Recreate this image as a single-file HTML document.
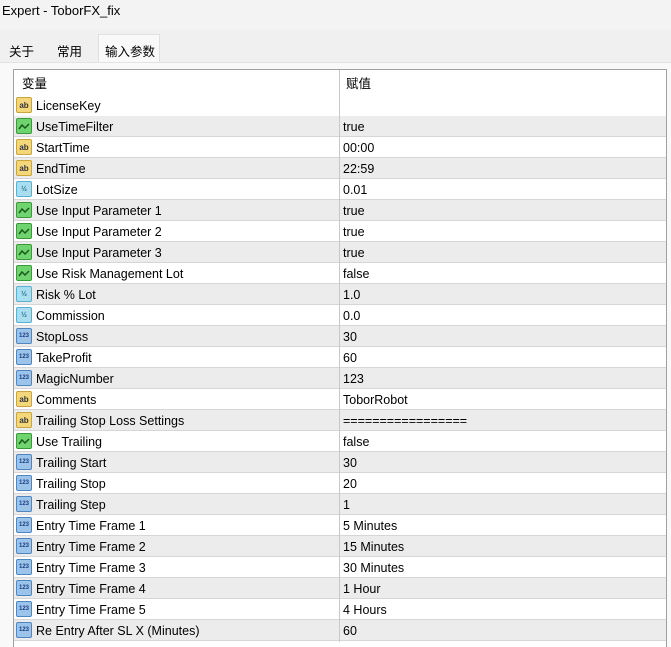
<!DOCTYPE html><html><head><meta charset="utf-8"><style>
*{margin:0;padding:0;box-sizing:border-box}
body{width:671px;height:647px;overflow:hidden;background:#f0f0f0;font-family:"Liberation Sans","Noto Sans CJK SC",sans-serif;font-size:12.5px;color:#000;position:relative}
.title{position:absolute;left:0;top:0;width:671px;height:30px;background:#f3f3f3;padding:3px 0 0 2px;font-size:13px}
.tabs{position:absolute;top:36px;left:0;height:26px;width:671px}
.tab{position:absolute;top:0;height:26px;padding-top:5px;font-size:12.5px}
.panel{position:absolute;left:0;top:62px;width:671px;height:585px;background:#f9f9f9;border-top:1px solid #e3e3e3}
.tbl{position:absolute;left:13px;top:69px;width:654px;height:578px;background:#fff;border:1px solid #a0a0a0;border-bottom:none}
.row{position:absolute;left:0;width:652px;height:21px;border-bottom:1px solid #d6d6d6}
.g{background:#ececec}
.row span{position:absolute;top:4px}
.n{left:22px}.v{left:329px}
.div{position:absolute;left:325px;top:0;width:1px;height:572px;background:#c8c8c8}
.ic{position:absolute;left:2px;top:2px;width:16px;height:16px;border-radius:2px;font-size:8px;font-weight:bold;text-align:center;line-height:15px}
.ab{background:#f3d77a;border:1px solid #c9a53a;color:#333}
.bo{background:#6fd46f;border:1px solid #3a9a3a}
.re{background:#a8def0;border:1px solid #5ab0d0;color:#2a6f90;font-size:7px}
.in{background:#9cc3ea;border:1px solid #4f86c0;color:#1a3f80;font-size:6px}
</style></head><body>
<div class="title">Expert - ToborFX_fix</div>
<div class="tabs">
<div class="tab" style="left:9px">关于</div>
<div class="tab" style="left:57px">常用</div>
<div class="tab" style="left:98px;top:-2px;height:28px;width:62px;background:#f9f9f9;border:1px solid #e0e0e0;border-bottom:none;padding:6px 0 0 6px">输入参数</div>
</div>
<div class="panel"></div>
<div class="tbl">
<div class="row" style="top:0;height:26px;border:none"><span class="n" style="left:8px;top:3px">变量</span><span class="v" style="left:332px;top:3px">赋值</span></div>
<div id="rows"></div>
<div class="div"></div>
</div>
<script>
var d=[["ab","LicenseKey",""],["bo","UseTimeFilter","true"],["ab","StartTime","00:00"],["ab","EndTime","22:59"],["re","LotSize","0.01"],["bo","Use Input Parameter 1","true"],["bo","Use Input Parameter 2","true"],["bo","Use Input Parameter 3","true"],["bo","Use Risk Management Lot","false"],["re","Risk % Lot","1.0"],["re","Commission","0.0"],["in","StopLoss","30"],["in","TakeProfit","60"],["in","MagicNumber","123"],["ab","Comments","ToborRobot"],["ab","Trailing Stop Loss Settings","================="],["bo","Use Trailing","false"],["in","Trailing Start","30"],["in","Trailing Stop","20"],["in","Trailing Step","1"],["in","Entry Time Frame 1","5 Minutes"],["in","Entry Time Frame 2","15 Minutes"],["in","Entry Time Frame 3","30 Minutes"],["in","Entry Time Frame 4","1 Hour"],["in","Entry Time Frame 5","4 Hours"],["in","Re Entry After SL X (Minutes)","60"]];
var h="";
d.forEach(function(r,i){var t=r[0]=="ab"?"ab":r[0]=="re"?"½":"123";
var top=25+21*i;h+='<div class="row'+(i%2?' g':'')+'" style="top:'+top+'px'+(i==0?';border:none':'')+'"><div class="ic '+r[0]+'">'+(r[0]=="bo"?'<svg width="14" height="14" viewBox="0 0 14 14"><path d="M2 10 L5 6 L8 9 L12 5" stroke="#1a5a1a" stroke-width="1.5" fill="none"/></svg>':t)+'</div><span class="n">'+r[1]+'</span><span class="v">'+r[2]+'</span></div>';});
document.getElementById("rows").innerHTML=h;
</script>
</body></html>
